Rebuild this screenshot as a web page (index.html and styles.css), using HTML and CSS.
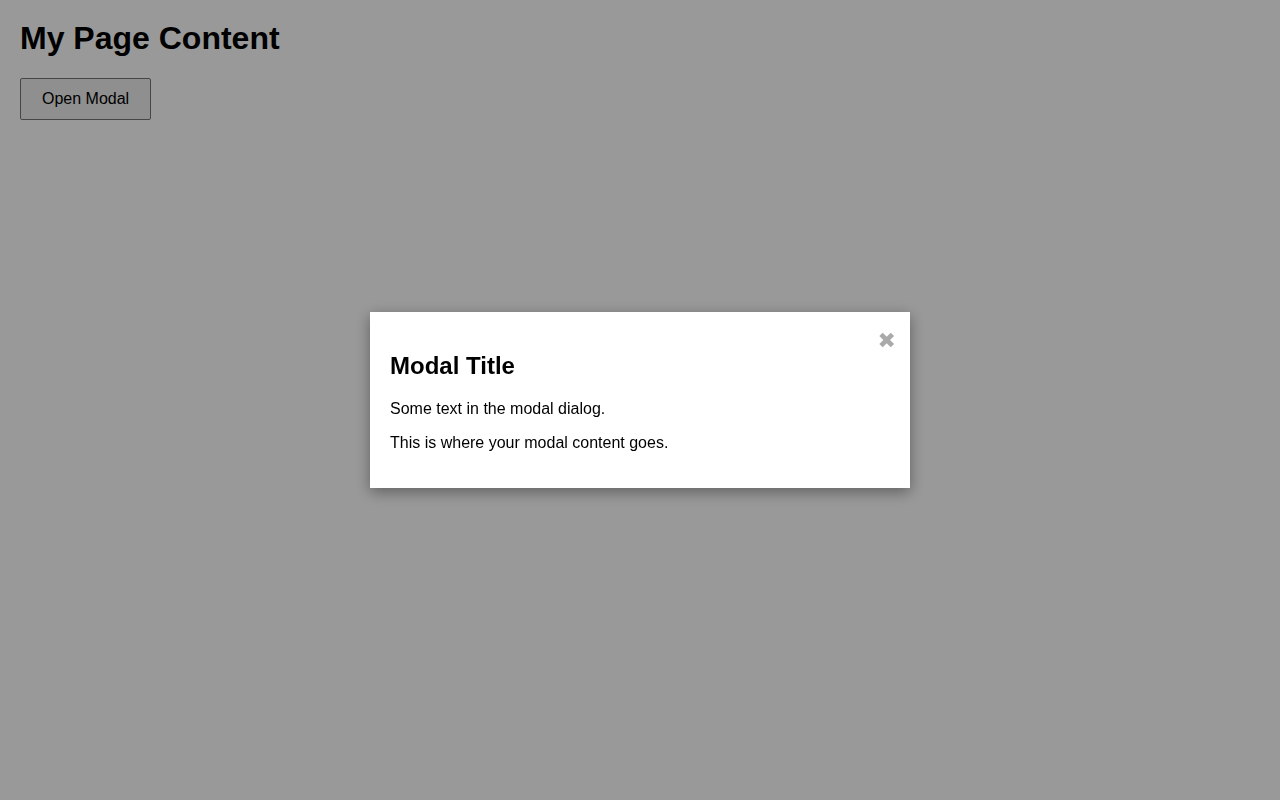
FILE: index.html
```html
<!DOCTYPE html>
<html lang="en">
<head>
<meta charset="utf-8">
<title>Modal</title>
<link rel="stylesheet" href="styles.css">
</head>
<body>
<main class="page">
  <h1 class="page-title">My Page Content</h1>
  <button class="open-btn" type="button">Open Modal</button>
</main>
<div class="overlay">
  <div class="modal" role="dialog" aria-labelledby="modal-title">
    <span class="close">&#x2716;</span>
    <h2 class="modal-title" id="modal-title">Modal Title</h2>
    <p class="modal-text">Some text in the modal dialog.</p>
    <p class="modal-text">This is where your modal content goes.</p>
  </div>
</div>
</body>
</html>
```

FILE: styles.css
```css
html, body {
  margin: 0;
  padding: 0;
}
body {
  font-family: "Liberation Sans", Arial, sans-serif;
  background: #ffffff;
  color: #000;
  height: 800px;
}
.page {
  padding: 20px;
}
.page-title {
  font-size: 32px;
  font-weight: bold;
  margin: 0 0 21px 0;
}
.open-btn {
  font-family: "Liberation Sans", Arial, sans-serif;
  font-size: 16px;
  line-height: 18px;
  padding: 11px 21px;
  background: #efefef;
  border: 1px solid #767676;
  border-radius: 2px;
  color: #000;
}
.overlay {
  position: fixed;
  inset: 0;
  background: rgba(0, 0, 0, 0.4);
  display: flex;
  align-items: center;
  justify-content: center;
}
.modal {
  position: relative;
  width: 500px;
  padding: 20px;
  background: #fff;
  box-shadow: 0 4px 14px rgba(0, 0, 0, 0.38);
}
.modal-title {
  font-size: 24px;
  font-weight: bold;
  margin: 20px 0;
}
.modal-text {
  font-size: 16px;
  margin: 16px 0;
}
.close {
  position: absolute;
  top: 18px;
  right: 14px;
  font-family: "DejaVu Sans", sans-serif;
  font-size: 22px;
  line-height: 1;
  color: #aaa;
  cursor: pointer;
}
```
